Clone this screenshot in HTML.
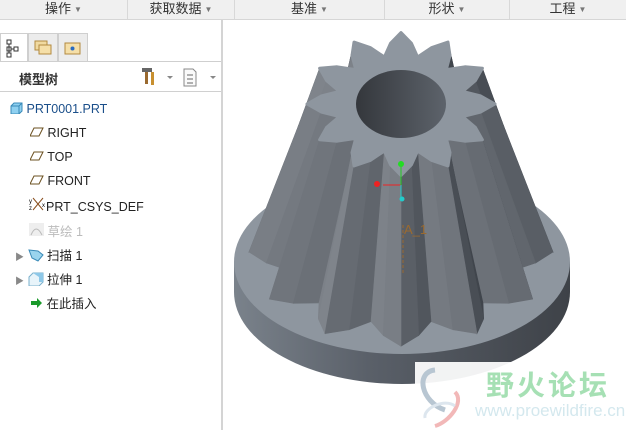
<!DOCTYPE html>
<html><head><meta charset="utf-8"><style>
body{margin:0;width:626px;height:430px;overflow:hidden;background:#fff;font-family:"Liberation Sans","Noto Sans CJK SC",sans-serif;position:relative}
.menu{position:absolute;left:0;top:0;width:626px;height:19px;background:#f0f0f0;border-bottom:1px solid #d6d6d6}
.mi{position:absolute;top:0;height:19px;line-height:17px;font-size:13px;color:#333;text-align:center;border-right:1px solid #d8d8d8}
.mi i{font-style:normal;font-size:8px;color:#777;margin-left:3px;vertical-align:1px}
.left{position:absolute;left:0;top:20px;width:221px;height:410px;background:#fff;border-right:2px solid #d4d4d4}
.tab{position:absolute;top:13px;height:27px;border:1px solid #cfcfcf;border-bottom:none;background:#ececec}
.hdr{position:absolute;left:0;top:41px;width:221px;height:29px;border-top:1px solid #cfcfcf;border-bottom:1px solid #d0d0d0}
.it{position:absolute;font-size:12.5px;color:#222;white-space:nowrap}
</style></head><body>
<div class="menu">
<div class="mi" style="left:0;width:127px">操作<i>▼</i></div>
<div class="mi" style="left:128px;width:106px">获取数据<i>▼</i></div>
<div class="mi" style="left:235px;width:149px">基准<i>▼</i></div>
<div class="mi" style="left:385px;width:124px">形状<i>▼</i></div>
<div class="mi" style="left:510px;width:116px;border:none">工程<i>▼</i></div>
</div>
<div class="left">
<div class="tab" style="left:0;width:26px;background:#fff;height:28px"><svg width="26" height="26"><g fill="none" stroke="#333"><rect x="6" y="6" width="4" height="4"/><rect x="6" y="13" width="4" height="4"/><rect x="6" y="19" width="4" height="4"/><rect x="13" y="13" width="4" height="4"/><path d="M8 10v9M10 15h3"/></g></svg></div>
<div class="tab" style="left:28px;width:28px"><svg width="28" height="26"><rect x="6" y="7" width="12" height="9" fill="#f0d9a0" stroke="#b28a40"/><rect x="10" y="11" width="12" height="9" fill="#f5dfa8" stroke="#b28a40"/></svg></div>
<div class="tab" style="left:58px;width:28px"><svg width="28" height="26"><rect x="6" y="9" width="15" height="11" fill="#f5dfa8" stroke="#b28a40"/><circle cx="13.5" cy="14.5" r="2" fill="#2a6bc0"/></svg></div>
<div class="hdr"><span style="position:absolute;left:19px;top:7px;font-size:13px;font-weight:bold;color:#333">模型树</span>
<svg style="position:absolute;left:140px;top:4px" width="80" height="22"><rect x="5" y="3" width="3" height="15" fill="#9a6a30"/><rect x="2" y="2" width="10" height="4" fill="#666"/><rect x="11" y="6" width="3" height="13" fill="#c89030"/><path d="M27 10l3 3 3-3z" fill="#888"/><path d="M44 3h9l3 3v14h-12z" fill="#fafafa" stroke="#888"/><path d="M47 9h6M47 13h6M47 17h6" stroke="#666"/><path d="M70 10l3 3 3-3z" fill="#888"/></svg></div>
<div class="it" style="left:10px;top:82px"><svg width="13" height="12" style="vertical-align:-1px"><path d="M1 4l3-3h8v8l-3 3H1z" fill="#8fd0f0" stroke="#3a8ab8"/><path d="M1 4h8v8M9 4l3-3" fill="none" stroke="#3a8ab8"/></svg> <span style="color:#1b4f8a">PRT0001.PRT</span></div>
<div class="it" style="left:30px;top:106px"><svg width="14" height="10"><path d="M4 1h9l-4 8H0z" fill="none" stroke="#6b5020"/></svg> RIGHT</div>
<div class="it" style="left:30px;top:130px"><svg width="14" height="10"><path d="M4 1h9l-4 8H0z" fill="none" stroke="#6b5020"/></svg> TOP</div>
<div class="it" style="left:30px;top:154px"><svg width="14" height="10"><path d="M4 1h9l-4 8H0z" fill="none" stroke="#6b5020"/></svg> FRONT</div>
<div class="it" style="left:29px;top:177px"><svg width="17" height="14"><path d="M4 1l10 12M14 1L4 13" stroke="#8a5020"/><text x="0" y="6" font-size="6">y</text><text x="0" y="13" font-size="6">z</text><text x="13" y="10" font-size="6">x</text></svg>PRT_CSYS_DEF</div>
<div class="it" style="left:29px;top:201px;color:#bbb"><svg width="15" height="13"><rect width="15" height="13" fill="#eee"/><path d="M2 12Q7 0 13 12" fill="none" stroke="#bbb"/></svg> 草绘 1</div>
<div class="it" style="left:15px;top:225px"><span style="color:#888;font-size:9px">▶</span> <svg width="16" height="14" style="vertical-align:-2px"><path d="M1 2l9 1 5 4-5 6-6-3z" fill="#9ad4ee" stroke="#3a8ab8"/></svg> 扫描 1</div>
<div class="it" style="left:15px;top:249px"><span style="color:#888;font-size:9px">▶</span> <svg width="16" height="14" style="vertical-align:-2px"><path d="M1 5l4-4h10v9l-4 4H1z" fill="#e8f4fa" stroke="#7ab0cc"/><path d="M5 1h10v9h-4V5z" fill="#8ec8e8"/></svg> 拉伸 1</div>
<div class="it" style="left:31px;top:273px"><svg width="12" height="10"><path d="M0 3h6V0l5 5-5 5V7H0z" fill="#1a9a2a"/></svg> 在此插入</div>
</div>
<svg id="g" style="position:absolute;left:0;top:0" width="626" height="430">
<defs>
<linearGradient id="sd" x1="0" x2="1"><stop offset="0" stop-color="#7a828b"/><stop offset="0.4" stop-color="#5a6069"/><stop offset="1" stop-color="#3e4248"/></linearGradient>
<linearGradient id="hl" x1="0" x2="1"><stop offset="0" stop-color="#34373c"/><stop offset="1" stop-color="#5d636b"/></linearGradient>
</defs>
<path d="M234 262v30A168 92 0 0 0 570 292v-30z" fill="url(#sd)"/>
<ellipse cx="402" cy="262" rx="168" ry="92" fill="#8e969f"/>
<g id="body"></g>
<path d="M401 185h-18" stroke="#e22" stroke-width="1"/><path d="M401 165v20" stroke="#2c2"/><path d="M401 185v14" stroke="#2cc"/>
<circle cx="377" cy="184" r="3" fill="#e22"/><circle cx="401" cy="164" r="3" fill="#2d2"/><circle cx="402" cy="199" r="2.5" fill="#2cc"/>
<path d="M403 225v50" stroke="#9a6a30" stroke-dasharray="3 2"/>
<text x="404" y="234" font-size="13" fill="#9a6a30">A_1</text>
</svg>
<div style="position:absolute;left:415px;top:362px;width:211px;height:68px;background:rgba(255,255,255,0.93)"></div>
<svg style="position:absolute;left:415px;top:362px" width="80" height="68"><path d="M20 8C0 10 6 40 30 48" fill="none" stroke="#b8c6d2" stroke-width="5"/><path d="M40 30c10 10-6 30-20 34" fill="none" stroke="#f2b8b8" stroke-width="4"/><path d="M10 56c-2-10 20-20 30-12" fill="none" stroke="#dde6ee" stroke-width="3"/></svg>
<div style="position:absolute;left:486px;top:364px;font-size:28px;font-weight:bold;color:#a6e0b4;letter-spacing:3px;font-family:'Noto Sans CJK SC',sans-serif">野火论坛</div>
<div style="position:absolute;left:475px;top:401px;font-size:17px;color:#d4e8ee">www.proewildfire.cn</div>
<script>
(function(){
var N=12,ns="http://www.w3.org/2000/svg",b=document.getElementById('body');
function star(cx,cy,ro,ri,sy){var p=[];for(var k=0;k<N*4;k++){var a=-Math.PI/2+k*Math.PI*2/(N*4);var t=k%4;var r=t==0?ro:(t==2?ri:(ro*0.55+ri*0.45));p.push([cx+r*Math.cos(a),cy+r*Math.sin(a)*sy,a]);}return p;}
var T=star(401,104,94,64,0.76),B=star(401,252,152,116,0.62);
var q=[];for(var i=0;i<T.length;i++){var j=(i+1)%T.length;var dx=B[j][0]-B[i][0],dy=B[j][1]-B[i][1];var nx=dy,ny=-dx;var L=Math.hypot(nx,ny)||1;nx/=L;ny/=L;
var s=0.5+0.5*(nx*-0.7+ny*0.3);q.push({p:[T[i],T[j],B[j],B[i]],y:(B[i][1]+B[j][1])/2,s:s});}
q.sort(function(a,b){return a.y-b.y});
q.forEach(function(o){var e=document.createElementNS(ns,'polygon');e.setAttribute('points',o.p.map(function(v){return v[0].toFixed(1)+','+v[1].toFixed(1)}).join(' '));var c=Math.round(52+o.s*85);e.setAttribute('fill','rgb('+c+','+(c+5)+','+(c+12)+')');e.setAttribute('stroke','rgb('+c+','+(c+5)+','+(c+12)+')');e.setAttribute('stroke-width','0.6');b.appendChild(e);});
var t=document.createElementNS(ns,'polygon');t.setAttribute('points',T.map(function(v){return v[0].toFixed(1)+','+v[1].toFixed(1)}).join(' '));t.setAttribute('fill','#8e969f');t.setAttribute('stroke','#8e969f');t.setAttribute('stroke-width','3');t.setAttribute('stroke-linejoin','round');b.appendChild(t);
var h=document.createElementNS(ns,'ellipse');h.setAttribute('cx',401);h.setAttribute('cy',104);h.setAttribute('rx',45);h.setAttribute('ry',34);h.setAttribute('fill','url(#hl)');b.appendChild(h);
})();
</script>
</body></html>
